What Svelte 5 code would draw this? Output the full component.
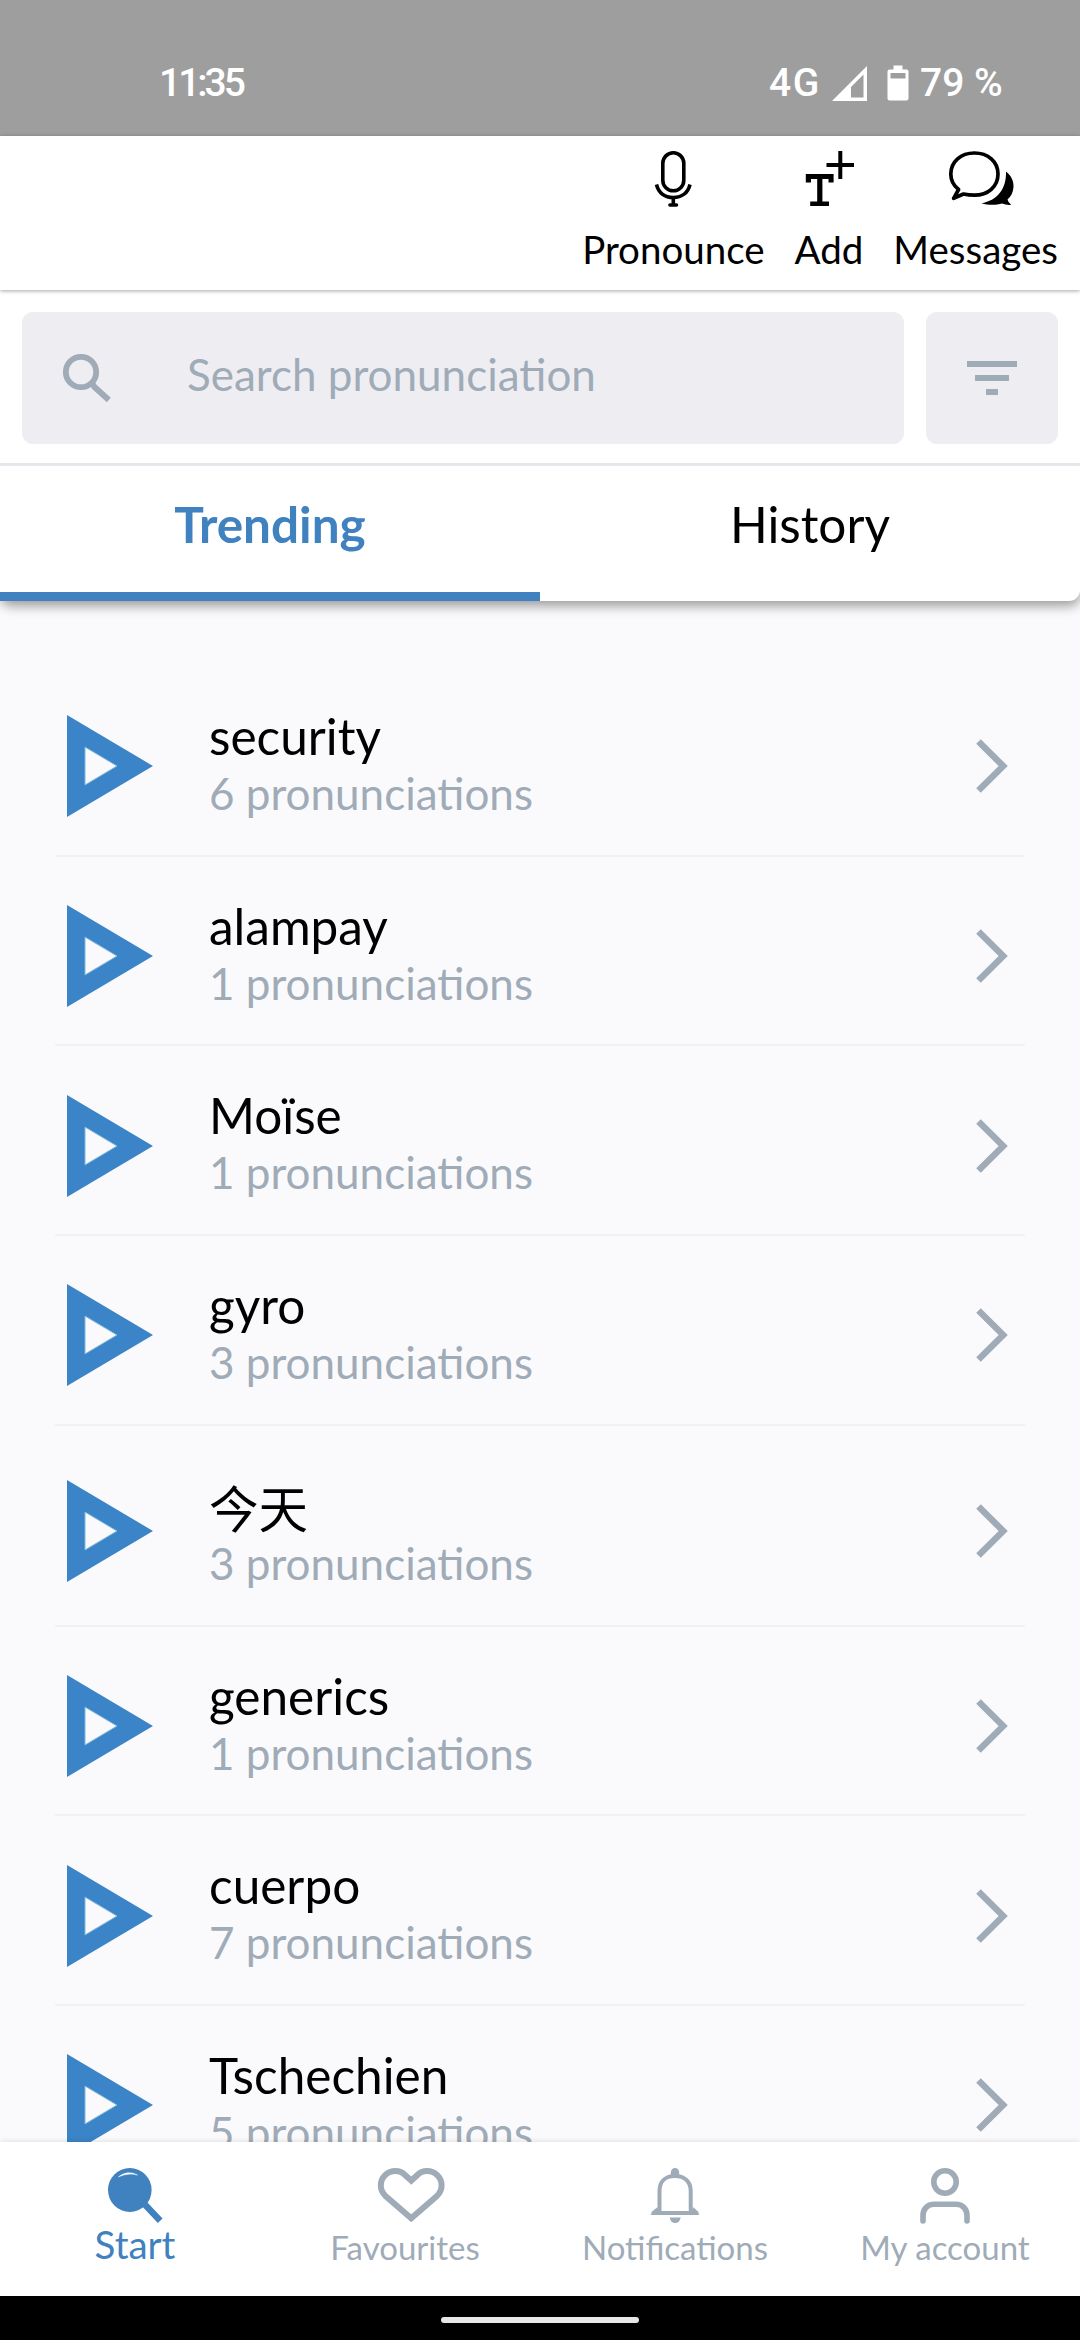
<script>
  let tab = "trending";
  let words = [
    { word: "security", count: 6 },
    { word: "alampay", count: 1 },
    { word: "Moïse", count: 1 },
    { word: "gyro", count: 3 },
    { word: "今天", count: 3, tall: true },
    { word: "generics", count: 1 },
    { word: "cuerpo", count: 7 },
    { word: "Tschechien", count: 5 }
  ];
</script>

<svelte:head>
  <title>Trending</title>
</svelte:head>

<div class="app">
  <div class="status">
    <span class="clock">11:35</span>
    <span class="net">4G</span>
    <svg class="signal" width="36" height="36" viewBox="0 0 36 36">
      <path d="M0 36L35 1V36Z" fill="#fff" />
      <path d="M19 22L31.5 9.500V32.500H19Z" fill="#9e9e9e" />
    </svg>
    <svg class="battery" width="22" height="36" viewBox="0 0 22 36">
      <path d="M6.500 0.500h9v4H20a2 2 0 0 1 1.500 2V33.500a2 2 0 0 1-2 2H2.500a2 2 0 0 1-2-2V6.500a2 2 0 0 1 2-2h4z" fill="#fff" />
      <rect x="3.500" y="8" width="15" height="5.500" fill="#9e9e9e" />
    </svg>
    <span class="percent">79 %</span>
  </div>

  <header>
    <button class="pronounce">
      <svg width="60" height="60" viewBox="642 149 60 60" fill="none" stroke="#000" stroke-width="3.600" stroke-linecap="round">
        <rect x="661.800" y="152.800" width="21" height="38" rx="10.500" />
        <path d="M655.500 184.500C657.500 193 664 197.500 672.300 197.500S687 193 689 184.500" stroke-linecap="butt" />
        <path d="M672.300 198V204.500M669 205H675.500" />
      </svg>
      <span>Pronounce</span>
    </button>
    <button class="add">
      <svg width="60" height="60" viewBox="798 149 60 60">
        <path d="M839.300 151V179M825.500 165H853" stroke="#000" stroke-width="4" />
        <path d="M804.800 174H832.600V182.500H827.500V179H821.400V201.500H828V206H809.200V201.500H816.200V179H810V182.500H804.800Z" />
      </svg>
      <span>Add</span>
    </button>
    <button class="messages">
      <svg width="70" height="60" viewBox="946 149 70 60">
        <path d="M973.400 153C987 153 997 161.500 997 174S987 195.200 973.400 195.200C969.500 195.200 966 194.800 962.500 194L952.600 198.300L957.600 189.500C952.500 185.500 949.800 180 949.800 174C949.800 161.500 960 153 973.400 153Z" fill="none" stroke="#000" stroke-width="3.700" stroke-linejoin="round" />
        <path d="M1005 171.500C1010.500 176 1012.800 181 1012.500 187C1012.200 192.500 1010 196.500 1006.500 199.500Q1007 202.500 1010.200 204.800Q1005 205.200 1001 203.500C995 205.400 987 205.300 980.500 203.300C996 200.500 1005.500 189.500 1005 171.500Z" />
      </svg>
      <span>Messages</span>
    </button>
  </header>

  <div class="searchbar">
    <div class="field">
      <svg width="50" height="50" viewBox="62 352 50 50" fill="none" stroke="#a0abb8" stroke-width="5.800">
        <circle cx="81" cy="371" r="15.200" />
        <path d="M92 382L94.500 386L108.800 399" stroke-width="6" />
      </svg>
      <span class="placeholder">Search pronunciation</span>
    </div>
    <button class="filter">
      <svg width="50" height="34" viewBox="0 0 50 34" fill="#a0abb8">
        <rect x="0" y="0" width="50" height="6" />
        <rect x="8" y="14" width="34" height="6" />
        <rect x="19" y="28" width="12" height="6" />
      </svg>
    </button>
  </div>

  <div class="tabs">
    <button class:active={tab === "trending"} on:click={() => (tab = "trending")}>Trending</button>
    <button class:active={tab === "history"} on:click={() => (tab = "history")}>History</button>
  </div>

  <main>
    {#each words as w}
      <div class="row" class:tall={w.tall}>
        <svg class="play" width="86" height="102" viewBox="0 0 86 102" fill-rule="evenodd">
          <path d="M0 0L86 51L0 102ZM18 32V70L50 51Z" fill="#3b84c8" />
          <path d="M18 32V70L50 51Z" fill="none" stroke="#7db9dd" stroke-width="1" />
        </svg>
        <div class="info">
          <span class="word">{w.word}</span>
          <span class="count">{w.count} pronunciations</span>
        </div>
        <svg class="chevron" width="34" height="56" viewBox="975 739 34 56">
          <path d="M978.500 742.500L1003.200 767L978.500 791.500" fill="none" stroke="#a0abb8" stroke-width="6.500" />
        </svg>
      </div>
    {/each}
  </main>

  <nav>
    <button class="start">
      <svg width="60" height="58" viewBox="104.500 2166 60 58">
        <ellipse cx="129.300" cy="2190" rx="21.800" ry="22" fill="#4081bf" />
        <path d="M142 2202L159.700 2220.700" stroke="#4081bf" stroke-width="6.500" />
        <path d="M118 2176.800Q127 2169.500 137 2175Q128 2172.500 118 2176.800Z" fill="#fff" stroke="#fff" stroke-width="0.500" />
      </svg>
      <span>Start</span>
    </button>
    <button class="fav">
      <svg width="70" height="58" viewBox="375.500 2166 70 58">
        <path d="M410.700 2180.600L404.500 2175C402 2172.300 398.800 2171 395 2171C387 2171 380.300 2177.200 380.300 2185.500C380.300 2189.500 382 2193 385 2196L410.700 2218.200L436.400 2196C439.400 2193 441.100 2189.500 441.100 2185.500C441.100 2177.200 434.400 2171 426.400 2171C422.600 2171 419.400 2172.300 416.900 2175Z" fill="none" stroke="#a0abb8" stroke-width="6" />
      </svg>
      <span>Favourites</span>
    </button>
    <button class="notif">
      <svg width="60" height="58" viewBox="643.500 2166 60 58">
        <path d="M658 2209.500V2191C658 2181 664.500 2176 673.500 2176S689.200 2181 689.200 2191V2209.500L693 2213H654Z" fill="none" stroke="#a0abb8" stroke-width="4" />
        <path d="M669.300 2178V2172.500a4.200 4.500 0 0 1 8.400 0V2178ZM650 2215V2212L656 2207V2211H691.500V2207L697 2212V2215ZM668.200 2217.500H679.200Q678 2223 673.700 2223T668.200 2217.500Z" fill="#a0abb8" />
      </svg>
      <span>Notifications</span>
    </button>
    <button class="account">
      <svg width="60" height="58" viewBox="914 2166 60 58" fill="none" stroke="#a0abb8" stroke-width="5.600" stroke-linecap="round">
        <circle cx="944" cy="2182" r="11.200" />
        <path d="M922 2221V2215.500C922 2209 926.500 2204.300 933 2204.300H955C961.500 2204.300 966 2209 966 2215.500V2221" />
      </svg>
      <span>My account</span>
    </button>
  </nav>

  <div class="gesture"><i></i></div>
</div>

<style>
:global(body) {
  margin: 0;
  background: #fafafc;
}
.app {
  width: 1080px;
  height: 2340px;
  display: flex;
  flex-direction: column;
  overflow: hidden;
  background: #fafafc;
  font-family: Lato, "Noto Sans CJK SC", sans-serif;
  color: #000;
}
button {
  border: 0;
  padding: 0;
  margin: 0;
  background: none;
  font: inherit;
  color: inherit;
}
svg {
  display: block;
  flex: none;
}
span {
  white-space: nowrap;
}
.status {
  flex: none;
  box-sizing: border-box;
  height: 136px;
  padding: 58px 0 0 159px;
  display: flex;
  background: #9e9e9e;
  color: #fff;
  font: 500 39px/50px Roboto, sans-serif;
}
.clock {
  width: 610px;
  letter-spacing: -3px;
}
.net {
  width: 63px;
  letter-spacing: 1.5px;
}
.signal {
  margin: 7px 19px 0 0;
}
.battery {
  margin: 7px 11px 0 0;
}
header {
  flex: none;
  position: relative;
  box-sizing: border-box;
  height: 154px;
  padding: 13px 22px 0 0;
  display: flex;
  justify-content: flex-end;
  gap: 30px;
  background: #fff;
  box-shadow: 0 1px 4px rgba(0, 0, 0, 0.35);
  z-index: 2;
}
header button {
  display: flex;
  flex-direction: column;
  align-items: center;
  font-size: 38.5px;
  line-height: 46px;
}
header span {
  margin-top: 17px;
}
.messages svg {
  margin-left: 12px;
}
.searchbar {
  flex: none;
  position: relative;
  box-sizing: border-box;
  height: 176px;
  padding: 22px 22px 0;
  display: flex;
  gap: 22px;
  background: #fff;
  border-bottom: 3px solid #e6e6ec;
  z-index: 1;
}
.field {
  flex: 1;
  box-sizing: border-box;
  height: 132px;
  padding-left: 40px;
  display: flex;
  align-items: center;
  background: #eeeef2;
  border-radius: 11px;
}
.placeholder {
  margin: 0 0 8px 75px;
  font-size: 44px;
  color: #a0abb8;
}
.filter {
  width: 132px;
  height: 132px;
  display: grid;
  place-items: center;
  background: #eeeef2;
  border-radius: 11px;
}
.tabs {
  flex: none;
  height: 135px;
  display: flex;
  background: #fff;
  border-radius: 0 0 11px 11px;
  box-shadow: 0 5px 12px rgba(0, 0, 0, 0.38);
}
.tabs button {
  flex: 1;
  box-sizing: border-box;
  padding-bottom: 10px;
  border-bottom: 9px solid transparent;
  font-size: 49.5px;
}
.tabs .active {
  color: #4081bf;
  font-weight: bold;
  border-color: #4081bf;
}
main {
  flex: 1;
  min-height: 0;
  padding: 66px 55px 0;
  overflow: hidden;
}
.row {
  box-sizing: border-box;
  height: 189.7px;
  padding: 11px 16px 0 12px;
  display: flex;
  align-items: center;
  border-bottom: 2px solid #f1f1f4;
}
.tall {
  height: 201px;
}
.info {
  flex: 1;
  margin: 0 0 8px 56px;
  display: flex;
  flex-direction: column;
}
.word {
  padding-bottom: 2px;
  font-size: 49.5px;
  line-height: 60px;
}
.tall .word {
  padding: 15px 0 0;
  line-height: 58px;
}
.count {
  font-size: 44px;
  line-height: 51px;
  color: #a0abb8;
}
nav {
  flex: none;
  position: relative;
  height: 154px;
  display: flex;
  background: #fff;
  box-shadow: 0 -1px 5px rgba(0, 0, 0, 0.1);
}
nav button {
  width: 270px;
  padding-top: 24px;
  display: flex;
  flex-direction: column;
  align-items: center;
  color: #a0abb8;
  font-size: 33px;
  line-height: 40px;
}
nav span {
  margin-top: 3px;
}
nav .start {
  font-size: 38.5px;
  color: #4081bf;
}
nav .start span {
  margin-top: 0;
}
nav .fav svg {
  margin-left: 11px;
}
.gesture {
  flex: none;
  height: 44px;
  display: grid;
  place-items: center;
  background: #000;
}
.gesture i {
  width: 198px;
  height: 6px;
  margin-top: 4px;
  border-radius: 3px;
  background: #e8e6e9;
}
</style>
